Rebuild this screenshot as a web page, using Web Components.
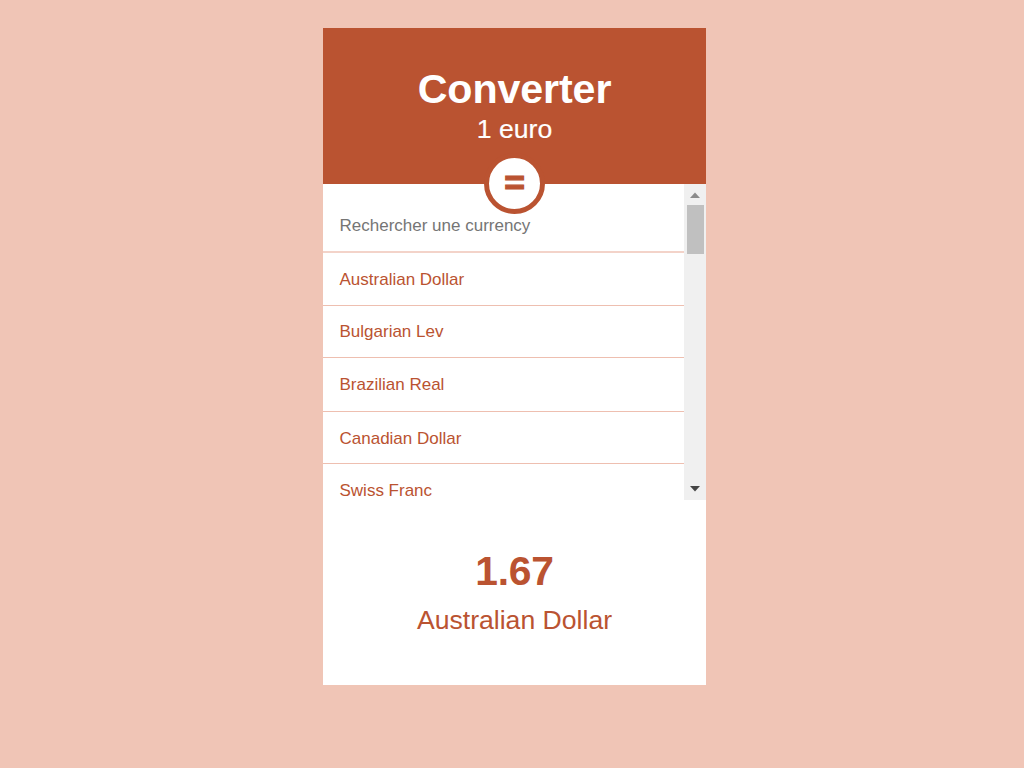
<!DOCTYPE html>
<html lang="fr">
<head>
<meta charset="utf-8">
<title>Converter</title>
<style>
body{margin:0;background:#f0c5b6;font-family:"Liberation Sans",Arial,sans-serif}
</style>
</head>
<body>
<currency-converter></currency-converter>
<script>
class Base extends HTMLElement{
  constructor(){super();this.attachShadow({mode:'open'}).innerHTML=this.constructor.html;}
}
customElements.define('converter-header',class extends Base{
  static html=`<style>
  :host{display:flex;flex-direction:column;align-items:center;box-sizing:border-box;height:155.5px;padding-top:37px;background:#ba5331;color:#fff;position:relative;z-index:1}
  h1{margin:0;font-size:41.2px;line-height:48px;font-weight:700;letter-spacing:-.1px}
  p{margin:0;font-size:26.6px;line-height:32px;-webkit-text-stroke:.2px #fff}
  .badge{position:absolute;top:125px;left:161px;width:61px;height:61px;box-sizing:border-box;border:5px solid #ba5331;border-radius:50%;background:#fff;color:#ba5331;display:flex;align-items:center;justify-content:center;font-size:35.5px;line-height:50px;font-weight:700;-webkit-text-stroke:1.2px #ba5331}
  .badge span{display:block;height:51px}
  </style><h1><slot name="title"></slot></h1><p><slot name="amount"></slot></p><div class="badge"><span>=</span></div>`;
});
customElements.define('currency-item',class extends Base{
  static html=`<style>
  :host{display:block;box-sizing:border-box;height:53px;padding-left:16.5px;border-bottom:1px solid #eebfb0;color:#ba5331;font-size:17px;line-height:53px;white-space:nowrap}
  :host([search]){height:69px;padding-top:16px;border-bottom:2px solid #f3d3c9;line-height:52px;color:#757575}
  :host([short]){height:52px}
  :host([raised]){line-height:51px}
  :host([tall]){height:54px}
  </style><slot></slot>`;
});
customElements.define('scroll-track',class extends Base{
  static html=`<style>
  :host{display:flex;flex-direction:column;align-items:center;width:22px;background:#f0f0f0}
  svg{display:block;width:22px;height:22px}
  .thumb{width:17px;height:49px;background:#c0c0c0;margin-top:-1px}
  .space{flex:1}
  </style><svg viewBox="0 0 22 22"><path d="M6 14h10l-5-5.5z" fill="#8b8b8b"/></svg><div class="thumb"></div><div class="space"></div><svg viewBox="0 0 22 22"><path d="M6 8h10l-5 5.5z" fill="#454545"/></svg>`;
});
customElements.define('currency-list',class extends Base{
  static html=`<style>
  :host{display:flex;height:316px;margin-top:.5px;overflow:hidden}
  .items{flex:1;overflow:hidden}
  </style><div class="items"><slot></slot></div><scroll-track></scroll-track>`;
});
customElements.define('conversion-result',class extends Base{
  static html=`<style>
  :host{display:flex;flex-direction:column;align-items:center;box-sizing:border-box;height:185px;padding-top:47px;color:#ba5331}
  strong{font-size:40.8px;line-height:48px;letter-spacing:-.2px}
  p{margin:10px 0 0;font-size:26.6px;line-height:31px}
  </style><strong><slot name="value"></slot></strong><p><slot name="currency"></slot></p>`;
});
customElements.define('currency-converter',class extends Base{
  static html=`<style>
  :host{display:block;width:383px;margin-left:323px;padding-top:28px}
  main{background:#fff}
  </style><main>
  <converter-header><span slot="title">Converter</span><span slot="amount">1 euro</span></converter-header>
  <currency-list>
    <currency-item search>Rechercher une currency</currency-item>
    <currency-item>Australian Dollar</currency-item>
    <currency-item short raised>Bulgarian Lev</currency-item>
    <currency-item tall>Brazilian Real</currency-item>
    <currency-item short>Canadian Dollar</currency-item>
    <currency-item>Swiss Franc</currency-item>
  </currency-list>
  <conversion-result><span slot="value">1.67</span><span slot="currency">Australian Dollar</span></conversion-result>
  </main>`;
});
</script>
</body>
</html>
